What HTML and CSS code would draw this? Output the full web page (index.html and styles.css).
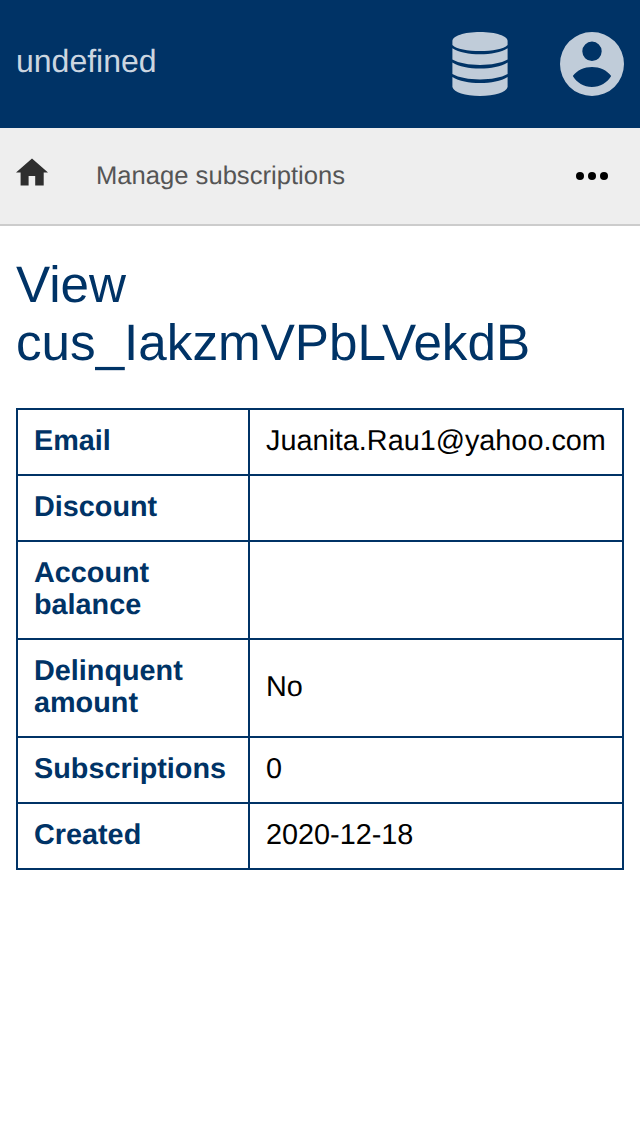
FILE: index.html
```html
<!DOCTYPE html>
<html lang="en">
<head>
<meta charset="utf-8">
<title>View customer</title>
<link rel="stylesheet" href="styles.css">
</head>
<body>
<header class="header">
  <span class="brand">undefined</span>
  <div class="menus">
    <svg class="icon-database" viewBox="0 0 56 64"><path d="M.4 9C.4 4 12 0 28 0s27.600 4 27.600 9v4C52 17 40 19 28 19S4 17 .4 13z"/><path d="M.4 16.200C7 20.200 17 22.200 28 22.200S49 20.200 55.600 16.200V27.600C49 31.300 39 33 28 33S7 31.300.4 27.600z"/><path d="M.4 30.600C7 34.600 17 36.600 28 36.600S49 34.600 55.600 30.600V42C49 45.700 39 47.400 28 47.400S7 45.700.4 42z"/><path d="M.4 45C7 49 17 51 28 51S49 49 55.600 45V55C54 60.500 43 64 28 64S2 60.500.4 55z"/></svg>
    <svg class="icon-account" viewBox="0 0 64 64"><path fill-rule="evenodd" d="M32 0a32 32 0 1 0 0 64 32 32 0 1 0 0-64zM32 9.600a9.700 9.700 0 1 1 0 19.400 9.700 9.700 0 1 1 0-19.400zM12.800 44C17 38 24.500 34.900 32 34.900S47 38 51.200 44C47.500 50.500 40 55 32 55S16.500 50.500 12.800 44z"/></svg>
  </div>
</header>
<nav class="navbar">
  <svg class="icon-home" viewBox="0 0 32 28"><path d="M16 .5 32 14.500H27.700V27.500H19.200V18H12.600V27.500H4.600V14.500H0z"/></svg>
  <span class="nav-title">Manage subscriptions</span>
  <svg class="icon-more" viewBox="0 0 32 8"><circle cx="4" cy="4" r="4"/><circle cx="16" cy="4" r="4"/><circle cx="28" cy="4" r="4"/></svg>
</nav>
<main class="content">
  <h1 class="title">View cus_IakzmVPbLVekdB</h1>
  <table class="details">
    <tr><th>Email</th><td>Juanita.Rau1@yahoo.com</td></tr>
    <tr><th>Discount</th><td></td></tr>
    <tr><th>Account balance</th><td></td></tr>
    <tr><th>Delinquent amount</th><td>No</td></tr>
    <tr><th>Subscriptions</th><td>0</td></tr>
    <tr><th>Created</th><td>2020-12-18</td></tr>
  </table>
</main>
</body>
</html>
```
FILE: styles.css
```css
* { box-sizing: border-box; }
body { margin: 0; background: #fff; font-family: "Liberation Sans", Arial, sans-serif; text-rendering: geometricPrecision; }
.header { display: flex; align-items: center; justify-content: space-between; height: 128px; padding: 0 16px; background: #036; }
.brand { padding-bottom: 6px; font-size: 32px; color: #ccd6e0; }
.menus { display: flex; gap: 52px; align-items: center; }
.menus svg { height: 64px; fill: #c0ccd9; }
.icon-database { width: 56px; }
.icon-account { width: 64px; }
.navbar { display: flex; align-items: center; height: 98px; padding: 0 32px 0 16px; background: #eee; border-bottom: 2px solid #ccc; }
.icon-home { width: 32px; height: 28px; margin-bottom: 8px; fill: #2e2e2e; }
.nav-title { margin-left: 48px; font-size: 25.6px; color: #555; }
.icon-more { width: 32px; height: 8px; margin-left: auto; }
.content { padding: 30px 16px; }
.title { margin: 0 0 36px; font-size: 51.2px; font-weight: 400; line-height: 58px; color: #036; }
.details { width: 608px; border-collapse: collapse; table-layout: fixed; font-size: 28.8px; line-height: 32px; }
.details th, .details td { padding: 15px 16px 17px; border: 2px solid #036; text-align: left; }
.details th { width: 232px; color: #036; }
.details tr { height: 66px; }
```
